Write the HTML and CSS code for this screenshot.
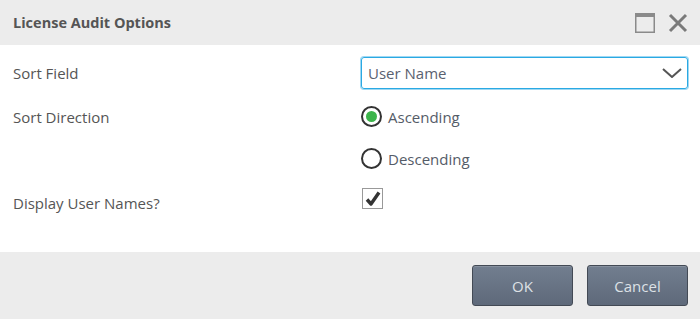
FILE: index.html
```html
<!DOCTYPE html>
<html>
<head>
<meta charset="utf-8">
<title>License Audit Options</title>
<link rel="stylesheet" href="styles.css">
</head>
<body>
<div class="dialog">
	<div class="titlebar">
		<span class="title">License Audit Options</span>
		<div class="tools">
			<svg class="tool" width="20" height="20" viewBox="0 0 20 20">
				<rect x="0.75" y="0.75" width="18.5" height="18.5" fill="none" stroke="#8a8a8a" stroke-width="1.5"/>
				<rect x="0" y="0" width="20" height="4" fill="#8a8a8a"/>
			</svg>
			<svg class="tool" width="20" height="20" viewBox="0 0 20 20">
				<path d="M2 2 L18 18 M18 2 L2 18" stroke="#7a7a7a" stroke-width="3"/>
			</svg>
		</div>
	</div>

	<div class="content">
		<div class="label">Sort Field</div>
		<div class="field">
			<div class="select">
				<span>User Name</span>
				<svg width="20" height="10" viewBox="0 0 20 10">
					<path d="M1 1 L10 9 L19 1" fill="none" stroke="#555" stroke-width="2"/>
				</svg>
			</div>
		</div>

		<div class="label">Sort Direction</div>
		<div class="field radios">
			<label class="option"><span class="radio on"></span>Ascending</label>
			<label class="option"><span class="radio"></span>Descending</label>
		</div>

		<div class="label">Display User Names?</div>
		<div class="field">
			<span class="check">
				<svg width="18" height="18" viewBox="0 0 18 18">
					<path d="M3 9.5 L7 14 L15 2.5" fill="none" stroke="#333" stroke-width="3.4" stroke-linejoin="round"/>
				</svg>
			</span>
		</div>
	</div>

	<div class="footer">
		<button class="btn">OK</button>
		<button class="btn">Cancel</button>
	</div>
</div>
</body>
</html>
```

FILE: styles.css
```css
* {margin:0; padding:0; box-sizing:border-box;}
body {font-family:"Open Sans", "Noto Sans", sans-serif; color:#555; background:#fff;}

.dialog {width:700px; height:319px; display:flex; flex-direction:column;}

.titlebar {height:45px; background:#ececec; display:flex; align-items:center; justify-content:space-between; padding:0 12px 0 13px;}
.title {font-size:14.5px; font-weight:bold; color:#555;}
.tools {display:flex; gap:13px; align-items:center;}
.tool {display:block;}

.content {flex:1; display:grid; grid-template-columns:348px 1fr; grid-auto-rows:min-content; row-gap:12px; padding:12px 12px 0 13px;}
.label {font-size:15px; line-height:32px; color:#555;}
.field {min-height:32px;}

.select {height:32px; border:1px solid #2aa9e3; box-shadow:0 0 0 1px #9fd8f3; border-radius:3px; display:flex; align-items:center; justify-content:space-between; padding:0 5px 0 6px; font-size:15px; color:#5a6170;}

.radios {display:flex; flex-direction:column; gap:10px;}
.option {height:32px; display:flex; align-items:center; font-size:15px; color:#555c68;}
.radio {width:21px; height:21px; border:2.5px solid #333; border-radius:50%; margin-right:6px; margin-top:-1px; display:flex; align-items:center; justify-content:center; background:#fff;}
.radio.on::after {content:""; width:11px; height:11px; border-radius:50%; background:#3cb44b;}

.check {width:21px; height:21px; border:1px solid #999; display:flex; align-items:center; justify-content:center; margin-top:1px; margin-left:1px;}

.footer {height:67px; background:#ececec; display:flex; justify-content:flex-end; align-items:flex-start; gap:14px; padding:13px 12px 0 0;}
.btn {width:101px; height:41px; border:1px solid #434a55; border-radius:3px; background:linear-gradient(#727e8f, #5e697a); color:#dde1e6; font-family:"Open Sans", sans-serif; font-size:15px; box-shadow:inset 0 1px 0 rgba(255,255,255,0.15);}
```
